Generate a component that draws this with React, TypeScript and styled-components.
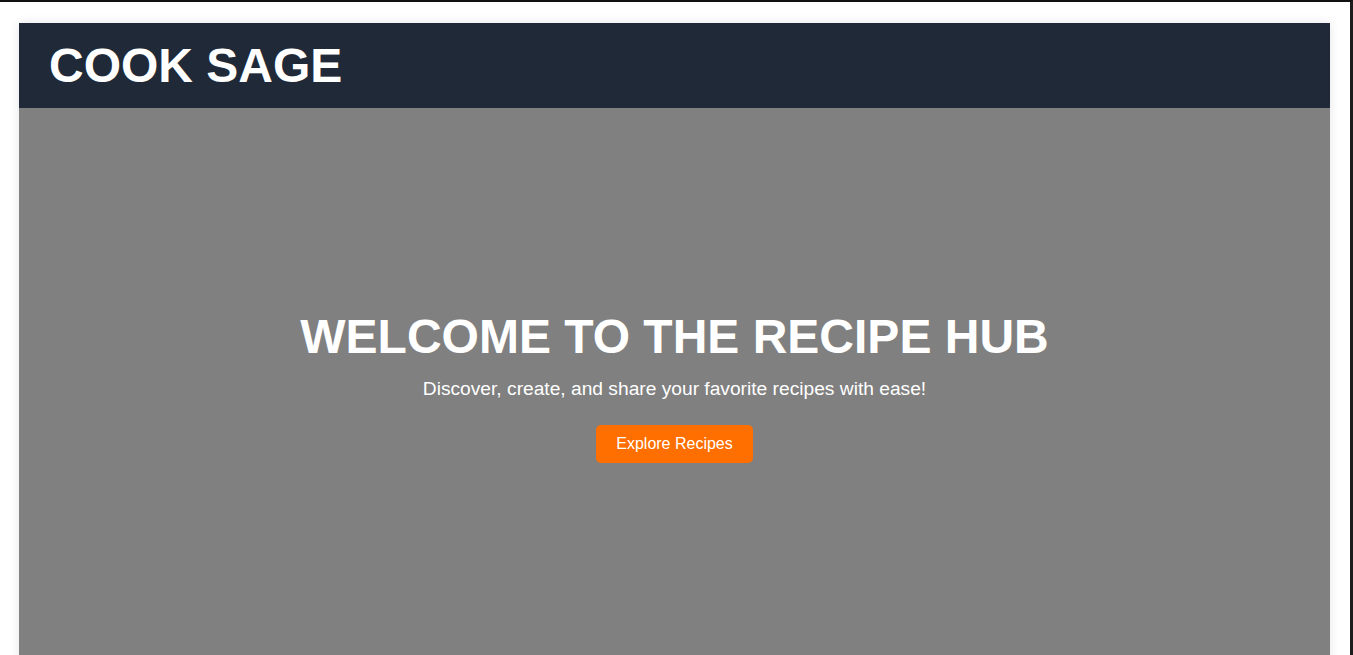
import React from "react";
import styled, { createGlobalStyle } from "styled-components";

const Global = createGlobalStyle`
  html, body {
    margin: 0;
    padding: 0;
    background: #ffffff;
    overflow: hidden;
  }
  body {
    font-family: "Liberation Sans", Arial, sans-serif;
  }
`;

const Frame = styled.div`
  box-sizing: border-box;
  width: 1353px;
  height: 655px;
  border-top: 2px solid #111111;
  border-right: 3px solid #1c1c1c;
  padding: 21px 20px 0 19px;
  overflow: hidden;
`;

const Container = styled.div`
  box-shadow: 0 0 10px rgba(0, 0, 0, 0.1);
`;

const Header = styled.header`
  background: #1f2937;
  padding: 15px 30px;
`;

const Logo = styled.h1`
  margin: 0;
  color: #ffffff;
  font-size: 48px;
  font-weight: 700;
  line-height: 55px;
`;

const Hero = styled.section`
  background: #808080;
  height: 556px;
  display: flex;
  flex-direction: column;
  align-items: center;
  justify-content: center;
  text-align: center;
  color: #ffffff;
`;

const Title = styled.h2`
  margin: 0 0 14px;
  font-size: 48px;
  font-weight: 700;
  line-height: 55px;
`;

const Subtitle = styled.p`
  margin: 0 0 25px;
  font-size: 19.2px;
  line-height: 22px;
`;

const Button = styled.button`
  background: #ff6f00;
  color: #ffffff;
  border: none;
  border-radius: 5px;
  padding: 10px 20px;
  font-family: "Liberation Sans", Arial, sans-serif;
  font-size: 16px;
  line-height: 18px;
  cursor: pointer;
`;

export default function App() {
  return (
    <>
      <Global />
      <Frame>
        <Container>
          <Header>
            <Logo>COOK SAGE</Logo>
          </Header>
          <Hero>
            <Title>WELCOME TO THE RECIPE HUB</Title>
            <Subtitle>Discover, create, and share your favorite recipes with ease!</Subtitle>
            <Button>Explore Recipes</Button>
          </Hero>
        </Container>
      </Frame>
    </>
  );
}
